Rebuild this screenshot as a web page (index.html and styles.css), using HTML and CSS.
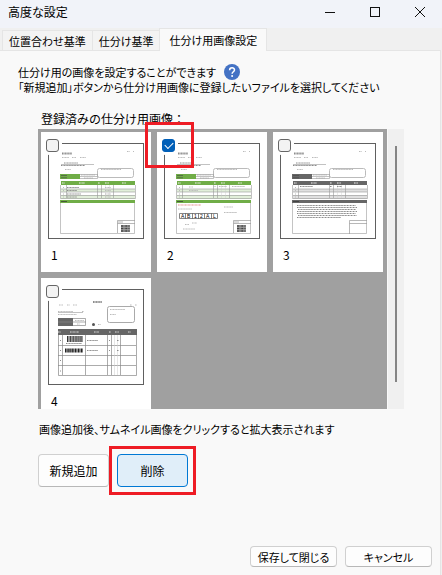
FILE: index.html
```html
<!DOCTYPE html>
<html lang="ja">
<head>
  <meta charset="UTF-8">
  <meta name="viewport" content="width=device-width, initial-scale=1.0">
  <title>高度な設定</title>
  <link rel="stylesheet" href="styles.css">
</head>
<body>
  <header class="titlebar">
    <h1>高度な設定</h1>
    <div class="window-buttons">
      <button type="button" aria-label="最小化"><svg width="12" height="12" viewBox="0 0 12 12"><path d="M1 6.5H11" /></svg></button>
      <button type="button" aria-label="最大化"><svg width="12" height="12" viewBox="0 0 12 12"><rect x="1.5" y="1.5" width="9" height="9" /></svg></button>
      <button type="button" aria-label="閉じる"><svg width="12" height="12" viewBox="0 0 12 12"><path d="M1 1L11 11M11 1L1 11" /></svg></button>
    </div>
  </header>

  <div class="tabs" role="tablist">
    <button type="button" class="tab" role="tab">位置合わせ基準</button>
    <button type="button" class="tab" role="tab">仕分け基準</button>
    <button type="button" class="tab active" role="tab" aria-selected="true">仕分け用画像設定</button>
  </div>

  <main class="panel">
    <div class="intro">
      <p class="intro-line">仕分け用の画像を設定することができます
        <button type="button" class="help" aria-label="ヘルプ">
          <svg width="16" height="16" viewBox="0 0 16 16"><circle cx="8" cy="8" r="8" fill="#4472c4" /><path d="M5.6 6.2C5.6 2.9 10.6 3 10.5 6C10.4 7.7 8.1 7.8 8.1 9.8" fill="none" stroke="#fff" stroke-width="1.5" /><circle cx="8.1" cy="12" r="1" fill="#fff" /></svg>
        </button>
      </p>
      <p>「新規追加」ボタンから仕分け用画像に登録したいファイルを選択してください</p>
    </div>

    <h2>登録済みの仕分け用画像：</h2>
    <div class="gallery">
      <div class="cards">
        <div class="card">
          <input type="checkbox" id="image1" class="check">
          <svg class="thumb" viewBox="1 1 94 94">
            <use href="#form-head" />
            <use href="#form-table" class="green" />
            <use href="#form-note" class="green" />
            <path class="ink dark" d="M19 44.5H31M19 47.5H29M19 51H33M19 54H29" />
            <path class="ink" d="M57 44.5H63M57 47.5H63M57 51H63M57 54H63" />
            <use href="#qr" />
          </svg>
          <label for="image1">1</label>
        </div>
        <div class="card">
          <input type="checkbox" id="image2" class="check" checked>
          <svg class="thumb" viewBox="1 1 94 94">
            <use href="#form-head" />
            <use href="#form-table" class="green" />
            <use href="#form-note" class="green" />
            <path class="ink" d="M25 44H29M25 47.5H34M49 43.5H52M55 43.5H63M68 43.5H81M14 66H28M60 64H69M60 69.5H73M28 80H33M21 81.5H25M19 86H31" />
            <path d="M14 62H37" stroke="#e58f8f" stroke-dasharray="1 .4" />
            <path d="M15.5 70.5H53.5V75.5H15.5ZM21.5 70V76M28.5 70V76M34.5 70V76M40.5 70V76M47.5 70V76" fill="none" stroke="#666" stroke-width=".8" />
            <text class="code" y="75"><tspan x="17">A</tspan><tspan x="23">B</tspan><tspan x="30">1</tspan><tspan x="36">2</tspan><tspan x="42">A</tspan><tspan x="49">L</tspan></text>
            <use href="#qr" />
          </svg>
          <label for="image2">2</label>
        </div>
        <div class="card">
          <input type="checkbox" id="image3" class="check">
          <svg class="thumb" viewBox="1 1 94 94">
            <use href="#form-head" />
            <use href="#form-table" class="gray" />
            <use href="#form-note" class="gray" />
            <path class="ink dark" d="M20 43.5H33M50 43.5H52M57 43.5H62" />
            <path class="ink dark" d="M17 62.5H76M17 64.5H77M18 66.5H76M17 68.5H77M17 70.5H76M18 72.5H77M17 74.5H61" />
            <path d="M69.5 91V77.5H87M69.5 80.5H87" fill="none" stroke="#999" stroke-width=".7" />
          </svg>
          <label for="image3">3</label>
        </div>
        <div class="card">
          <input type="checkbox" id="image4" class="check">
          <svg class="thumb" viewBox="1 1 94 94">
            <path class="ink dark" d="M45 13H54" stroke-width="2" />
            <path class="ink" d="M11 16H15M19 16H22M25 16H29M82 16H84M87 16H89M10 22.5H25M34 22.5H36M10 25.5H29M62 20.5H77M62 25.5H68M50 35.5H53" />
            <path d="M10 23.5H35" stroke="#999" stroke-width=".6" />
            <rect x="59.500" y="17.500" width="27" height="16" rx="2" fill="none" stroke="#aaa" />
            <rect x="10" y="29" width="15" height="8" fill="#666" />
            <path d="M25 29.500H37.500V36.500H25M10 33H38" fill="none" stroke="#888" stroke-width=".7" />
            <path class="ink" d="M27 31.500H36M29 35H32" />
            <circle cx="45.500" cy="35.500" r="1.500" fill="#555" />
            <rect x="10" y="40" width="79" height="6" fill="#666" />
            <path d="M10 43H13M22 43H31M46 43H51M61 43H63M67 43H71M80 43H83" stroke="#ddd" stroke-dasharray="1 .4" />
            <path d="M10.500 46V86.500H88.500V46M10 56.500H88M10 66.500H88M10 76.500H88M14.500 46V86M37.500 46V86M59.500 46V86M63.500 46V86M72.500 46V86" fill="none" stroke="#888" stroke-width=".7" />
            <path d="M66.500 46V86M69.500 46V86" stroke="#ccc" stroke-width=".5" />
            <path d="M19 50H35" stroke="#333" stroke-width="6" stroke-dasharray="1.300 .5 .7 .6" />
            <path d="M17 61.500H35" stroke="#222" stroke-width="4" stroke-dasharray="1.500 .4 .8 .5" />
            <path class="ink dark" d="M18 54.500H34M39 51.500H50M39 61.500H50M69 51.500H71M69 61.500H71M12 51.500H13M12 61.500H13M12 71.500H13M12 82H13M61 51.500H62M61 61.500H62" />
          </svg>
          <label for="image4">4</label>
        </div>
      </div>
      <div class="scrollbar"></div>
      <span class="marker marker-check"></span>
    </div>

    <p class="hint">画像追加後、サムネイル画像をクリックすると拡大表示されます</p>
    <div class="actions">
      <button type="button" class="btn">新規追加</button>
      <div class="marked">
        <button type="button" class="btn selected">削除</button>
        <span class="marker marker-delete"></span>
      </div>
    </div>

    <footer class="footer">
      <button type="button" class="btn small">保存して閉じる</button>
      <button type="button" class="btn small">キャンセル</button>
    </footer>
  </main>

  <!-- Shared parts of the order form thumbnails -->
  <svg class="parts" aria-hidden="true">
    <defs>
      <g id="form-head">
        <path class="ink dark" d="M14 10.500H24" stroke-width="2" />
        <path class="ink" d="M79 8.500H82M85 8.500H86M14 14.500H21M24 14.500H28M32 14.500H38M17 26.500H23M53 26.500H73M33 32H47M36 35H45" />
        <path class="ink dark" d="M16 20H30M13 22.500H37" />
        <path d="M13 21.500H46" stroke="#999" stroke-width=".6" />
        <rect x="49.500" y="25.500" width="36" height="9" rx="2" fill="none" stroke="#bbb" />
        <path d="M32 31.500H49.500V35.500H32M32 33.500H49" fill="none" stroke="#999" stroke-width=".6" />
      </g>
      <g id="form-table">
        <rect x="12" y="31" width="20" height="5" fill="currentColor" />
        <path d="M13 32.500H19M13 34.800H19" stroke="#444" stroke-width=".6" />
        <rect x="13" y="46" width="74" height="3" fill="currentColor" opacity=".2" />
        <rect x="13" y="52" width="74" height="4" fill="currentColor" opacity=".2" />
        <rect x="13" y="38" width="74" height="4" fill="currentColor" />
        <path d="M14 40H17M31 40H37M50 40H52M57 40H61M74 40H78" stroke="#eee" stroke-dasharray="1 .4" />
        <path d="M12.500 42V55.500H87.500V42M13 46H87M13 49H87M13 52.500H87M18.500 42V55M49.500 42V55M53.500 42V55M65.500 42V55" fill="none" stroke="#999" stroke-width=".6" />
        <path d="M57.500 42V55M61.500 42V55" stroke="#ccc" stroke-width=".4" />
        <path class="ink" d="M15 44.500H16M15 47.500H16M15 51H16M15 54H16" />
      </g>
      <g id="form-note">
        <rect x="12" y="57" width="75" height="3" fill="currentColor" />
        <path d="M13 58.500H19" stroke="#333" stroke-width=".7" />
        <path d="M12.500 60V90.500H86.500V60" fill="none" stroke="#aaa" stroke-width=".7" />
      </g>
      <g id="qr">
        <path d="M69.500 90V77.500H87M69.500 80.500H87M70 79H75" fill="none" stroke="#999" stroke-width=".7" />
        <rect x="73" y="82" width="9" height="7" fill="#aaa" />
        <path d="M73 83H82M73 85.500H82M73 88H82" stroke="#444" stroke-width="1.400" stroke-dasharray="2 .5 1 .7" />
      </g>
    </defs>
  </svg>
</body>
</html>
```

FILE: styles.css
```css
/* Global Styles */
* {
  box-sizing: border-box;
}

body {
  display: flex;
  flex-direction: column;
  min-height: 100vh;
  margin: 0;
  background: #f0f0f0;
  color: #000000;
  font-family: 'Noto Sans CJK JP', sans-serif;
  font-size: 11px;
  font-feature-settings: 'palt';
  line-height: 16px;
}

h1, h2, p {
  margin: 0;
  font-size: 11px;
  font-weight: normal;
}

h1, h2 {
  font-size: 12px;
}

button {
  padding: 0;
  border: none;
  background: none;
  color: inherit;
  font: inherit;
  font-feature-settings: inherit;
}

/* Title Bar */
.titlebar {
  display: flex;
  align-items: center;
  justify-content: space-between;
  height: 28px;
  padding: 0 0 4px 8px;
  background: #f1f3f9;
}

.window-buttons {
  display: flex;
}

.window-buttons button {
  display: flex;
  align-items: center;
  justify-content: center;
  width: 45px;
  height: 24px;
}

.window-buttons svg {
  fill: none;
  stroke: #111111;
}

/* Tabs */
.tabs {
  display: flex;
  align-items: flex-end;
  height: 22px;
  padding-left: 2px;
}

.tab {
  height: 20px;
  padding: 0 6px;
  border: 1px solid #e5e5e5;
  border-width: 1px 0 0 1px;
  background: #f3f3f3;
  white-space: nowrap;
}

.tab.active {
  z-index: 1;
  height: 23px;
  margin-bottom: -1px;
  padding: 0 9px;
  border-right-width: 1px;
  background: #f9f9f9;
}

/* Panel */
.panel {
  display: flex;
  flex: 1;
  flex-direction: column;
  margin-right: 1px;
  padding: 13px 8px 8px 18px;
  border: 1px solid #e5e5e5;
  border-width: 1px 1px 0 0;
  background: #f9f9f9;
}

.intro {
  line-height: 15px;
  white-space: nowrap;
}

.intro-line {
  display: flex;
  align-items: center;
  gap: 8px;
}

.help {
  display: flex;
}

h2 {
  margin: 16px 0 2px 23px;
  font-feature-settings: normal;
}

/* Gallery */
.gallery {
  position: relative;
  display: flex;
  gap: 1px;
  height: 280px;
  margin: 0 28px 0 20px;
}

.cards {
  display: grid;
  flex: 1;
  grid-template-columns: repeat(auto-fill, 110px);
  grid-auto-rows: 140px;
  gap: 6px;
  padding: 3px;
  overflow: hidden;
  background: #a0a0a0;
}

.card {
  position: relative;
  padding: 11px 7px 0;
  background: #ffffff;
}

.thumb {
  display: block;
  width: 96px;
  height: 96px;
  border: 1px solid #606060;
}

.card label {
  display: block;
  padding: 8px 3px;
  font-size: 12px;
}

.check {
  position: absolute;
  top: 7px;
  left: 5px;
  width: 13px;
  height: 13px;
  margin: 0;
  border: 1px solid #666666;
  border-radius: 3px;
  background: #f3f3f3;
  box-shadow: 0 0 0 3px #ffffff;
  appearance: none;
}

.check:checked {
  border-color: #005fb8;
  background: #005fb8;
}

.check:checked::after {
  content: '';
  display: block;
  width: 7px;
  height: 4px;
  margin: 2px;
  border: solid #ffffff;
  border-width: 0 0 1px 1px;
  transform: rotate(-45deg);
}

.scrollbar {
  width: 16px;
  padding: 17px 7px 27px;
  background: #f0f0f0;
}

.scrollbar::before {
  content: '';
  display: block;
  height: 100%;
  background: #858585;
}

/* Thumbnail Drawings */
.parts {
  position: absolute;
  width: 0;
  height: 0;
}

.green {
  color: #70ad47;
}

.gray {
  color: #666666;
}

.ink {
  fill: none;
  stroke: #bbbbbb;
  stroke-dasharray: 1.4 0.4 0.8 0.5;
}

.ink.dark {
  stroke: #8c8c8c;
}

.code {
  font-family: 'Liberation Sans', sans-serif;
  font-size: 5px;
}

/* Red Markers */
.marker {
  position: absolute;
  border: 3px solid #ee1c25;
  pointer-events: none;
}

.marker-check {
  top: -7px;
  left: 107px;
  width: 49px;
  height: 46px;
}

.marker-delete {
  inset: -8px;
}

/* Buttons */
.hint {
  margin: 12px 0 17px 21px;
}

.actions {
  display: flex;
  gap: 8px;
  margin-left: 20px;
}

.marked {
  position: relative;
}

.btn {
  display: block;
  width: 71px;
  height: 33px;
  border: 1px solid #d0d0d0;
  border-bottom-color: #b8b8b8;
  border-radius: 4px;
  background: #fdfdfd;
  font-size: 12px;
}

.btn.selected {
  border-color: #0078d4;
  background: #e0eef9;
}

.btn.small {
  width: 87px;
  height: 21px;
  font-size: 11px;
}

.footer {
  display: flex;
  justify-content: flex-end;
  gap: 8px;
  margin-top: auto;
}
```
